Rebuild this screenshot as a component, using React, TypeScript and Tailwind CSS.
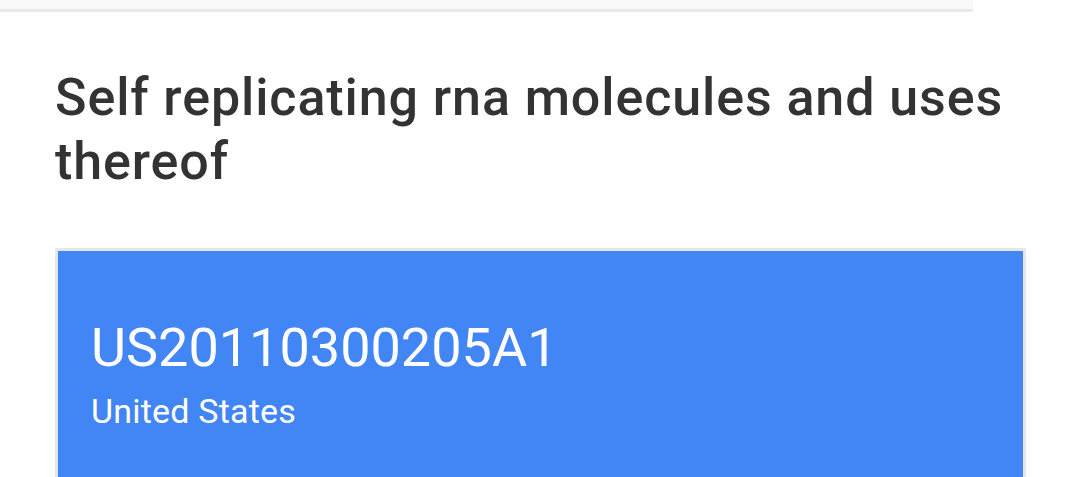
import React from "react";

export default function App() {
  return (
    <div className="w-[1070px] h-[477px] overflow-hidden bg-white font-['Roboto',sans-serif]">
      {/* top strip */}
      <div className="w-[973px] h-[12px] bg-[#f9f9f9] border-b-[3px] border-[#e8e8e8]" />

      <div className="pl-[55px] pr-[44px]">
        <h1 className="mt-[54px] text-[52px] leading-[64px] tracking-[0.9px] font-medium text-[#333333]">
          Self replicating rna molecules and uses thereof
        </h1>

        <div className="mt-[54px] border-[3px] border-[#e6e6e6] rounded-[2px] bg-[#4285f4] pl-[33px] pt-[65px] pb-[60px]">
          <div className="text-[54px] leading-[64px] font-normal text-white">US20110300205A1</div>
          <div className="mt-[11px] text-[34px] leading-[40px] tracking-[0.2px] text-white">United States</div>
        </div>
      </div>
    </div>
  );
}
